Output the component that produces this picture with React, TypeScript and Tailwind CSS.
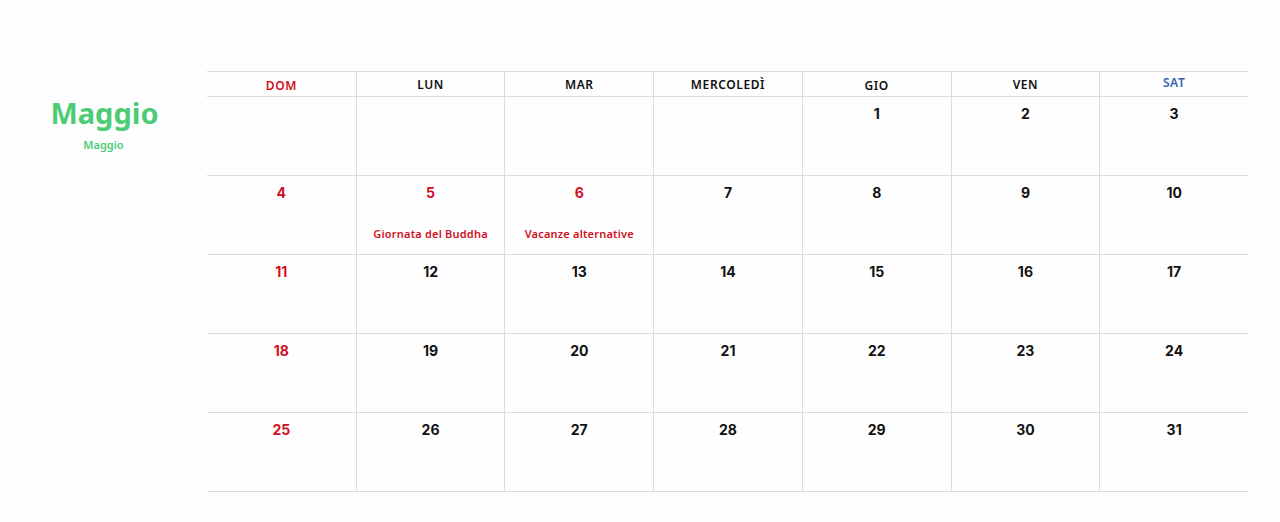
import React from "react";

const days = ["DOM", "LUN", "MAR", "MERCOLEDÌ", "GIO", "VEN", "SAT"];

type Cell = { n?: number; red?: boolean; note?: string };

const weeks: Cell[][] = [];
{
  const cells: Cell[] = [];
  for (let i = 0; i < 4; i++) cells.push({});
  for (let d = 1; d <= 31; d++) {
    const col = cells.length % 7;
    const c: Cell = { n: d, red: col === 0 };
    if (d === 5) { c.red = true; c.note = "Giornata del Buddha"; }
    if (d === 6) { c.red = true; c.note = "Vacanze alternative"; }
    cells.push(c);
  }
  for (let i = 0; i < cells.length; i += 7) weeks.push(cells.slice(i, i + 7));
}

export default function App() {
  return (
    <div className="w-[1280px] h-[522px] bg-[#fefeff] flex" style={{ fontFamily: "'Noto Sans', 'DejaVu Sans', sans-serif" }}>
      <div className="w-[207px] flex flex-col items-center pt-[95px]">
        <div className="text-[29px] leading-[36px] font-bold text-[#4ccc74] pl-[2px]">Maggio</div>
        <div className="text-[11px] leading-[14px] font-semibold text-[#4ccc74] mt-[7px]">Maggio</div>
      </div>
      <div className="w-[1041px] mt-[71px]">
        <div className="grid grid-cols-7 h-[26px] border-t border-b border-[#dedae3]">
          {days.map((d, i) => (
            <div
              key={d}
              className={`flex justify-center text-[12px] leading-[16px] font-semibold tracking-[0.6px] ${i > 0 ? "border-l border-[#dedae3]" : ""} ${i === 0 ? "text-[#d0101e] pt-[6px]" : i === 6 ? "text-[#2f62a8] pt-[3px]" : i === 4 ? "text-[#111] pt-[6px]" : "text-[#111] pt-[5px]"}`}
            >
              {d}
            </div>
          ))}
        </div>
        {weeks.map((w, wi) => (
          <div key={wi} className="grid grid-cols-7 h-[79px] border-b border-[#dedae3]">
            {w.map((c, i) => (
              <div
                key={i}
                className={`flex flex-col items-center pt-[9px] ${i > 0 ? "border-l border-[#dedae3]" : ""}`}
              >
                {c.n !== undefined && (
                  <div
                    className={`text-[14px] leading-[16px] font-bold ${c.red ? "text-[#d0101e]" : "text-[#111]"}`}
                    style={{ fontFamily: "Inter, 'Liberation Sans', sans-serif" }}
                  >
                    {c.n}
                  </div>
                )}
                {c.note && (
                  <div className="text-[11px] leading-[14px] font-semibold text-[#d0101e] mt-[26px] tracking-[0.2px]">{c.note}</div>
                )}
              </div>
            ))}
          </div>
        ))}
      </div>
    </div>
  );
}
